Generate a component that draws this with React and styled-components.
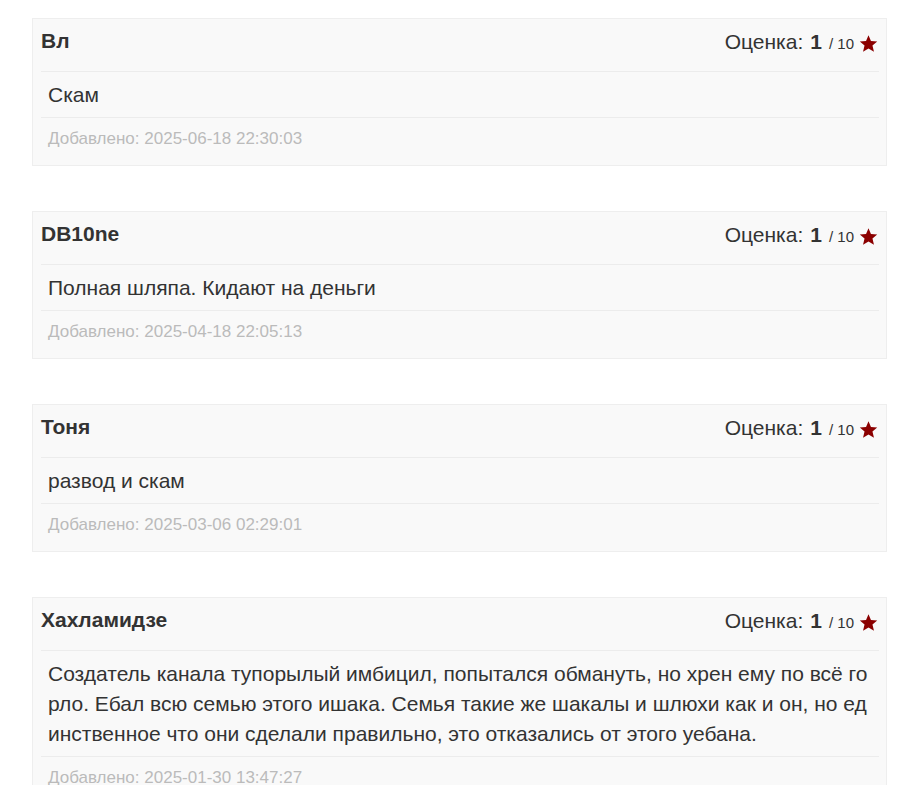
import React from 'react';
import styled, { createGlobalStyle } from "styled-components";

const GlobalStyle = createGlobalStyle`
  html, body {
    margin: 0;
    padding: 0;
    background: #fff;
    font-family: "Liberation Sans", Arial, sans-serif;
    color: #333;
  }
  * { box-sizing: border-box; }
`;

const Page = styled.div`
  padding: 18px 26px 0 32px;
  display: flex;
  flex-direction: column;
  gap: 45px;
`;

const Card = styled.div`
  background: #f9f9f9;
  border: 1px solid #eeeeee;
  padding: 0 7px 0 8px;
`;

const Header = styled.div`
  display: flex;
  justify-content: space-between;
  align-items: flex-start;
  height: 53px;
  padding: 11px 1px 0 0;
  line-height: 24px;
  border-bottom: 1px solid #ececec;
`;

const Name = styled.div`
  font-size: 21px;
  font-weight: bold;
  color: #333;
  margin-top: -1px;
`;

const Rating = styled.div`
  display: flex;
  align-items: baseline;
  font-size: 21px;
  color: #333;
`;

const Score = styled.b`
  margin-left: 7px;
`;

const Max = styled.span`
  font-size: 15px;
  margin-left: 7px;
`;

const Star = styled.svg`
  width: 19px;
  height: 19px;
  margin-left: 5px;
  fill: #8b0000;
  align-self: center;
`;

const Body = styled.div`
  padding: 8px 7px 7px 7px;
  font-size: 21px;
  line-height: 30px;
  word-break: break-all;
  border-bottom: 1px solid #ececec;
`;

const Added = styled.div`
  padding: 9px 7px 14px 7px;
  font-size: 17px;
  line-height: 24px;
  color: #bbbbbb;
`;

const reviews = [
  { name: "Вл", score: 1, text: "Скам", date: "2025-06-18 22:30:03" },
  { name: "DB10ne", score: 1, text: "Полная шляпа. Кидают на деньги", date: "2025-04-18 22:05:13" },
  { name: "Тоня", score: 1, text: "развод и скам", date: "2025-03-06 02:29:01" },
  {
    name: "Хахламидзе",
    score: 1,
    text: "Создатель канала тупорылый имбицил, попытался обмануть, но хрен ему по всё горло. Ебал всю семью этого ишака. Семья такие же шакалы и шлюхи как и он, но единственное что они сделали правильно, это отказались от этого уебана.",
    date: "2025-01-30 13:47:27",
  },
];

const Review = ({ review }) => (
  <Card>
    <Header>
      <Name>{review.name}</Name>
      <Rating>
        Оценка: <Score>{review.score}</Score>
        <Max>/ 10</Max>
        <Star viewBox="0 0 24 24">
          <path d="M12 1.5l3.1 7.3 7.9.6-6 5.2 1.9 7.7L12 18.2l-6.9 4.1L7 14.6 1 9.4l7.9-.6z" />
        </Star>
      </Rating>
    </Header>
    <Body>{review.text}</Body>
    <Added>Добавлено: {review.date}</Added>
  </Card>
);

export default function App() {
  return (
    <>
      <GlobalStyle />
      <Page>
        {reviews.map((r) => (
          <Review key={r.date} review={r} />
        ))}
      </Page>
    </>
  );
}
